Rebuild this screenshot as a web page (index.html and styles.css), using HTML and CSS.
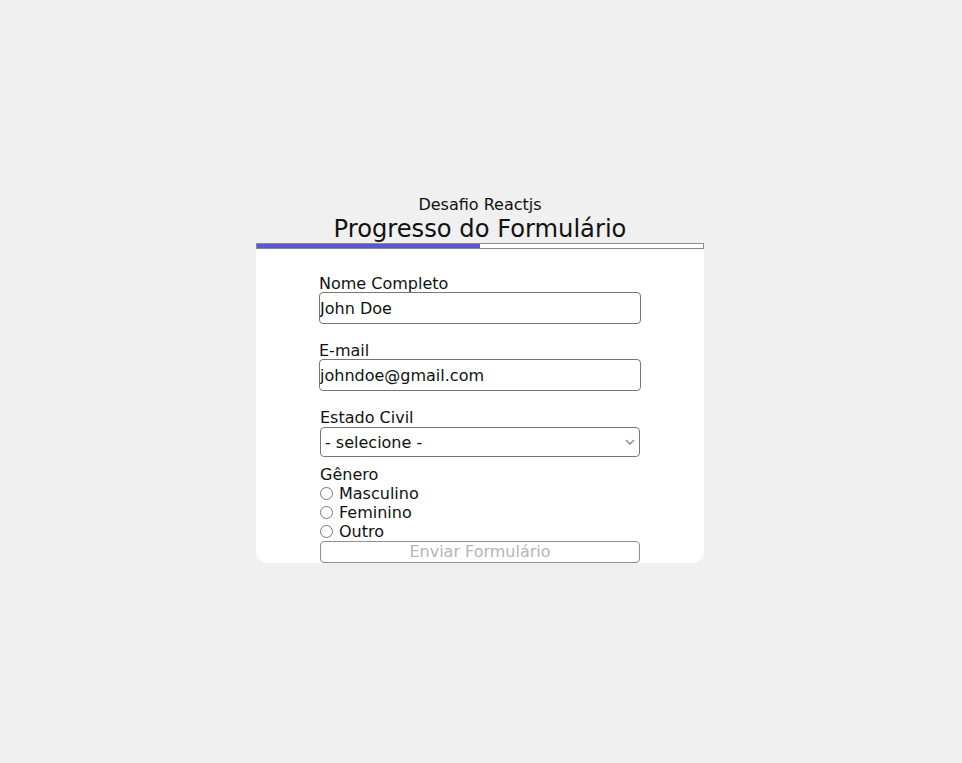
FILE: index.html
```html
<!DOCTYPE html>
<html lang="pt-BR">
<head>
<meta charset="utf-8">
<title>Desafio Reactjs</title>
<link rel="stylesheet" href="styles.css">
</head>
<body>
<div class="app">
  <div class="heading">
    <h3 class="subtitle">Desafio Reactjs</h3>
    <h1 class="title">Progresso do Formulário</h1>
  </div>
  <div class="progress"><div class="progress-fill" style="width: 50%"></div></div>
  <div class="card">
    <form class="form">
      <div class="field">
        <label class="label" for="nome">Nome Completo</label>
        <input class="input" id="nome" type="text" value="John Doe">
      </div>
      <div class="field">
        <label class="label" for="email">E-mail</label>
        <input class="input" id="email" type="email" value="johndoe@gmail.com">
      </div>
      <div class="field field-narrow">
        <label class="label" for="estado">Estado Civil</label>
        <div class="select-wrap">
          <select class="select" id="estado">
            <option>- selecione -</option>
          </select>
          <svg class="chevron" width="10" height="6" viewBox="0 0 10 6" aria-hidden="true"><path d="M1 1 L5 5 L9 1" fill="none" stroke="#8a8a8a" stroke-width="1.4"/></svg>
        </div>
      </div>
      <div class="field field-narrow radios">
        <span class="label label-group">Gênero</span>
        <label class="radio"><input type="radio" name="genero"> Masculino</label>
        <label class="radio"><input type="radio" name="genero"> Feminino</label>
        <label class="radio"><input type="radio" name="genero"> Outro</label>
      </div>
      <button class="button" type="button" disabled>Enviar Formulário</button>
    </form>
  </div>
</div>
</body>
</html>
```
FILE: styles.css
```css
html, body {
  margin: 0;
  padding: 0;
}
body {
  background: #f0f0f0;
  font-family: "DejaVu Sans", Verdana, sans-serif;
  color: #111;
  min-height: 100vh;
  display: flex;
  align-items: center;
  justify-content: center;
}
.app {
  width: 448px;
  margin-right: 2px;
  display: flex;
  flex-direction: column;
}
.heading {
  text-align: center;
}
.subtitle {
  margin: 0;
  font-size: 16px;
  font-weight: normal;
  line-height: 10px;
}
.title {
  margin: 0;
  padding-top: 6px;
  font-size: 24.2px;
  font-weight: normal;
  line-height: 27px;
}
.progress {
  height: 4px;
  border: 1px solid #8a8a8a;
  background: #fff;
}
.progress-fill {
  height: 100%;
  background: #5757dc;
}
.card {
  background: #fff;
  border-radius: 0 0 12px 12px;
  padding: 27px 0 0 63px;
}
.form {
  width: 322px;
  display: flex;
  flex-direction: column;
}
.field {
  display: flex;
  flex-direction: column;
  margin-bottom: 19px;
}
.field-narrow {
  margin-left: 1px;
  width: 320px;
  margin-bottom: 10px;
}
.label {
  font-size: 16px;
  line-height: 16px;
}
.label-group {
  margin-bottom: 1px;
}
.input {
  box-sizing: border-box;
  height: 32px;
  width: 322px;
  margin: 0;
  padding: 0;
  border: 1px solid #767676;
  border-radius: 4px;
  font-family: inherit;
  font-size: 16px;
  color: #111;
}
.select-wrap {
  position: relative;
  margin-top: 1px;
}
.select {
  -webkit-appearance: none;
  appearance: none;
  box-sizing: border-box;
  height: 30px;
  width: 320px;
  margin: 0;
  padding: 0 4px;
  border: 1px solid #767676;
  border-radius: 4px;
  font-family: inherit;
  font-size: 16px;
  color: #111;
  background: #fff;
}
.chevron {
  position: absolute;
  right: 5px;
  top: 12px;
  pointer-events: none;
}
.radios {
  margin-bottom: 0;
}
.radio {
  display: flex;
  align-items: center;
  font-size: 16px;
  line-height: 19px;
}
.radio input {
  margin: 0 6px 0 0;
  width: 13px;
  height: 13px;
}
.button {
  margin-left: 1px;
  width: 320px;
  height: 22px;
  box-sizing: border-box;
  border: 1px solid #8f8f8f;
  border-radius: 4px;
  background: #fff;
  color: #b5b5b5;
  font-family: inherit;
  font-size: 16px;
  line-height: 20px;
  padding: 0;
}
```
